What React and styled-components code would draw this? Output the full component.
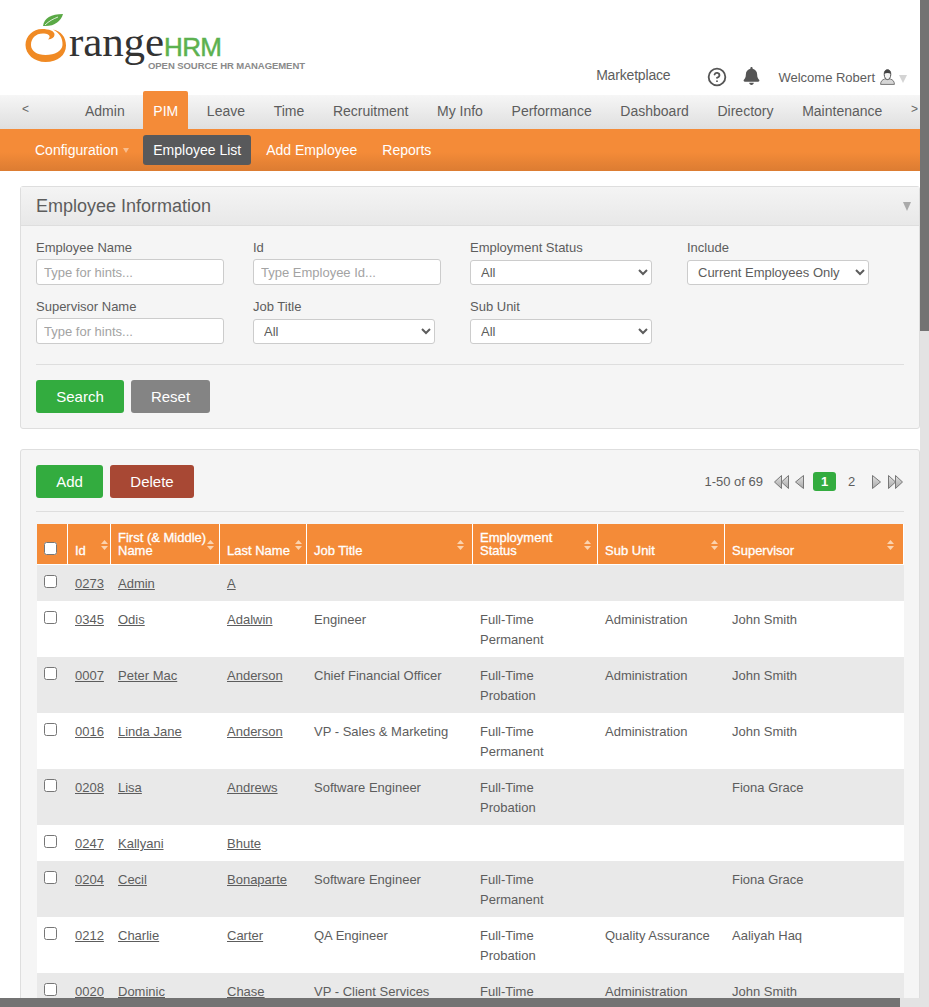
import styled, { createGlobalStyle } from 'styled-components';
import { FaBell } from 'react-icons/fa';
import { CircleHelp } from 'lucide-react';

const GlobalStyle = createGlobalStyle`
    html, body {
        margin: 0;
        padding: 0;
        height: 100%;
        overflow: hidden;
        background: #fff;
    }
    body, input, select, button {
        font-family: "Liberation Sans", Arial, sans-serif;
        font-size: 13px;
        color: #5d5d5d;
    }
`;

const Shell = styled.div`
    display: grid;
    grid-template-columns: minmax(0, 1fr) 9px;
    grid-template-rows: minmax(0, 1fr) 9px;
    height: 100vh;
    overflow: hidden;
`;
const Page = styled.div`
    overflow: hidden;
    min-height: 0;
`;
const VTrack = styled.div`
    background: #e3e3e3;
`;
const VThumb = styled.div`
    height: 331px;
    background: #737373;
`;
const HTrack = styled.div`
    background: #e3e3e3;
`;
const HThumb = styled.div`
    width: 900px;
    height: 100%;
    background: #737373;
`;
const Corner = styled.div`
    background: #e3e3e3;
`;

const Header = styled.header`
    display: flex;
    justify-content: space-between;
    height: 95px;
`;
const Logo = styled.svg`
    width: 320px;
    height: 80px;
    flex: none;
`;
const UserArea = styled.div`
    display: flex;
    align-items: center;
    height: 30px;
    margin-top: 62px;
    padding-right: 13px;
`;
const Marketplace = styled.a`
    margin-right: 37px;
    margin-top: -4px;
    font-size: 14px;
    letter-spacing: -0.18px;
`;
const HelpIcon = styled(CircleHelp)`
    width: 20px;
    height: 20px;
    margin-right: 16px;
    color: #555;
`;
const BellIcon = styled(FaBell)`
    width: 17px;
    height: 18px;
    margin-right: 18px;
    margin-top: -2px;
    color: #555;
`;
const Welcome = styled.span`
    margin-right: 5px;
`;
const GreyArrow = styled.span`
    width: 0;
    height: 0;
    margin-left: 4px;
    margin-top: 3px;
    border-left: 4px solid transparent;
    border-right: 4px solid transparent;
    border-top: 8px solid #d4d4d4;
`;

const MainNav = styled.nav`
    display: flex;
    height: 34px;
    font-size: 14px;
    background: linear-gradient(#f6f6f6, #dfdfdf);
`;
const NavArrow = styled.span`
    flex: none;
    width: ${(p) => (p.$right ? '18px' : '75px')};
    padding-left: ${(p) => (p.$right ? '10px' : '22px')};
    box-sizing: border-box;
    font-size: 12px;
    line-height: 28px;
    color: #666;
`;
const NavItem = styled.a`
    flex: none;
    padding: ${(p) => (p.$active ? '4px' : '0')} 10px 0;
    margin-top: ${(p) => (p.$active ? '-4px' : '0')};
    margin-right: 8.65px;
    line-height: 33px;
    border-radius: 2px 2px 0 0;
    color: ${(p) => (p.$active ? '#fff' : '#5d5d5d')};
    background: ${(p) => (p.$active ? '#f48b38' : 'transparent')};
`;

const SubNav = styled.nav`
    display: flex;
    align-items: flex-start;
    gap: 5px;
    height: 42px;
    padding: 6px 0 0 25px;
    box-sizing: border-box;
    font-size: 14px;
    background: linear-gradient(#f48b38 55%, #dc7c32);
`;
const SubItem = styled.a`
    display: flex;
    align-items: center;
    height: 30px;
    padding: 0 ${(p) => (p.$menu ? '4px' : '10px')} 0 10px;
    border-radius: 3px;
    color: #fff;
    background: ${(p) => (p.$active ? '#58595b' : 'transparent')};
`;
const MenuCaret = styled.span`
    width: 0;
    height: 0;
    margin: 1px 5px 0 5px;
    border-left: 3px solid transparent;
    border-right: 3px solid transparent;
    border-top: 5px solid #f9bd8d;
`;

const Main = styled.main`
    width: 900px;
    margin-left: 20px;
    padding-top: 15px;
`;
const Panel = styled.section`
    margin-bottom: 20px;
    border: 1px solid #dedede;
    border-radius: 3px;
    background: #f5f5f5;
`;
const PanelHead = styled.div`
    display: flex;
    align-items: center;
    justify-content: space-between;
    height: 38px;
    padding: 0 8px 0 15px;
    border-bottom: 1px solid #dedede;
    background: linear-gradient(#f4f4f4, #e8e8e8);
`;
const PanelTitle = styled.h1`
    margin: 0;
    font-size: 18px;
    font-weight: normal;
    color: #5d5d5d;
`;
const Collapse = styled.span`
    width: 0;
    height: 0;
    border-left: 4.5px solid transparent;
    border-right: 4.5px solid transparent;
    border-top: 9px solid #aaa;
`;
const PanelBody = styled.div`
    padding: ${(p) => (p.$list ? '15px' : '13px 15px 15px')};
`;
const FilterGrid = styled.div`
    display: grid;
    grid-template-columns: repeat(4, 217px);
    row-gap: 13px;
`;
const Field = styled.div`
    display: flex;
    flex-direction: column;
    align-items: flex-start;
`;
const FieldLabel = styled.label`
    height: 16px;
    line-height: 18px;
    margin-bottom: 4px;
`;
const TextInput = styled.input`
    width: 188px;
    height: 26px;
    box-sizing: border-box;
    padding: 0 7px;
    border: 1px solid #ccc;
    border-radius: 3px;
    background: #fff;
    outline: none;
    &::placeholder {
        color: #a3a3a3;
        opacity: 1;
    }
`;
const Select = styled.select`
    width: 182px;
    height: 25px;
    margin-top: 1px;
    box-sizing: border-box;
    padding: 0 6px 1px;
    border: 1px solid #ccc;
    border-radius: 3px;
    background: #fff;
`;
const Divider = styled.hr`
    height: 1px;
    margin: ${(p) => (p.$tight ? '13px 0 12px' : '20px 0 15px')};
    border: 0;
    background: #dedede;
`;
const ButtonRow = styled.div`
    display: flex;
    gap: 7px;
`;
const ActionButton = styled.button`
    height: 33px;
    width: ${(p) => p.$width}px;
    padding: 0;
    border: 0;
    border-radius: 3px;
    font-size: 15px;
    color: #fff;
    background: ${(p) => p.$bg};
`;

const ListTop = styled.div`
    display: flex;
    align-items: center;
    justify-content: space-between;
`;
const Pager = styled.div`
    display: flex;
    align-items: center;
    height: 33px;
    padding-right: 1px;
`;
const PagerCount = styled.span`
    margin-right: 11px;
`;
const PagerIcon = styled.svg`
    height: 14px;
    width: ${(p) => (p.$double ? 15 : 9)}px;
    margin-right: ${(p) => p.$gap}px;
`;
const PageNum = styled.span`
    width: 23px;
    height: 19px;
    margin-right: ${(p) => (p.$current ? '4px' : '9px')};
    line-height: 19px;
    text-align: center;
    border-radius: 3px;
    font-weight: ${(p) => (p.$current ? 'bold' : 'normal')};
    color: ${(p) => (p.$current ? '#fff' : '#5d5d5d')};
    background: ${(p) => (p.$current ? '#33ac3f' : 'transparent')};
`;

const Table = styled.table`
    width: 867px;
    margin-left: 1px;
    table-layout: fixed;
    border-collapse: separate;
    border-spacing: 0;
`;
const Col = styled.col`
    width: ${(p) => p.$width}px;
`;
const HeadRow = styled.tr`
    height: 41px;
`;
const Th = styled.th`
    position: relative;
    box-sizing: border-box;
    padding: 0 0 7px 7px;
    vertical-align: bottom;
    text-align: left;
    font-size: 13px;
    font-weight: normal;
    line-height: 13px;
    color: #fff;
    -webkit-text-stroke: 0.3px #fff;
    background: #f48b38;
    border-right: 1px solid #fff;
    border-bottom: 1px solid #fff;
`;
const SortIcon = styled.svg`
    position: absolute;
    top: 16px;
    left: calc((100% - 7px) * 0.95);
    width: 7px;
    height: 10px;
`;
const Td = styled.td`
    padding: 9px 7px 7px;
    vertical-align: top;
    line-height: 20px;
    background: ${(p) => (p.$alt ? '#e9e9e9' : '#fff')};
`;
const CheckCell = styled(Td)`
    padding: 10px 0 0 7px;
`;
const Check = styled.input`
    display: block;
    margin: 0;
`;
const HeadCheck = styled(Check)`
    margin-bottom: 2px;
`;
const RowLink = styled.a`
    color: #5d5d5d;
    text-decoration: underline;
`;

const columns = [
    { width: 31 },
    { width: 43, label: 'Id' },
    { width: 109, label: ['First (& Middle)', 'Name'] },
    { width: 87, label: 'Last Name' },
    { width: 166, label: 'Job Title' },
    { width: 125, label: ['Employment', 'Status'] },
    { width: 127, label: 'Sub Unit' },
    { width: 179, label: 'Supervisor' },
];

const rows = [
    ['0273', 'Admin', 'A', '', [], '', ''],
    ['0345', 'Odis', 'Adalwin', 'Engineer', ['Full-Time', 'Permanent'], 'Administration', 'John Smith'],
    ['0007', 'Peter Mac', 'Anderson', 'Chief Financial Officer', ['Full-Time', 'Probation'], 'Administration', 'John Smith'],
    ['0016', 'Linda Jane', 'Anderson', 'VP - Sales & Marketing', ['Full-Time', 'Permanent'], 'Administration', 'John Smith'],
    ['0208', 'Lisa', 'Andrews', 'Software Engineer', ['Full-Time', 'Probation'], '', 'Fiona Grace'],
    ['0247', 'Kallyani', 'Bhute', '', [], '', ''],
    ['0204', 'Cecil', 'Bonaparte', 'Software Engineer', ['Full-Time', 'Permanent'], '', 'Fiona Grace'],
    ['0212', 'Charlie', 'Carter', 'QA Engineer', ['Full-Time', 'Probation'], 'Quality Assurance', 'Aaliyah Haq'],
    ['0020', 'Dominic', 'Chase', 'VP - Client Services', ['Full-Time'], 'Administration', 'John Smith'],
];

const navItems = ['Admin', 'PIM', 'Leave', 'Time', 'Recruitment', 'My Info', 'Performance', 'Dashboard', 'Directory', 'Maintenance'];

const OrangeLogo = () => (
    <Logo viewBox="0 0 320 80">
        <path
            d="M53 29.5C61 31 66 37 66 45.5C66 55 58 62 45.5 62C34 62 25.5 54 25.5 45C25.5 36 33 29 42 29C49 29 55 31 54.5 35C54.2 37.5 52 39 48 39.5C51 37 50 34 44 33.5C36 33 31 38 31 45C31 51 37 55 45.5 55C55 55 62 51 62.5 45C63 38 59 32.5 53 29.5Z"
            fill="#f08a24"
        />
        <path d="M43 26C44 18 51 14 63 14C61 21 54 27 43 26Z" fill="#5aa945" />
        <path d="M45 25C49 21 53 19 58 17" stroke="#fff" strokeWidth="0.8" fill="none" />
        <text x="69" y="56" fontFamily="Liberation Serif, serif" fontSize="43" fill="#333" textLength="95">
            range
        </text>
        <text x="164" y="56" fontFamily="Liberation Sans, sans-serif" fontSize="26" fill="#5cb14f" stroke="#5cb14f" strokeWidth="0.5" textLength="58">
            HRM
        </text>
        <text x="148" y="68.5" fontFamily="Liberation Sans, sans-serif" fontSize="9.5" fontWeight="bold" fill="#8a8a8a" textLength="157">
            OPEN SOURCE HR MANAGEMENT
        </text>
    </Logo>
);

const Avatar = () => (
    <svg width="15" height="16" viewBox="0 0 15 16">
        <path d="M0.6 15.4C0.6 12 2.4 10.8 4.6 10L10.4 10C12.6 10.8 14.4 12 14.4 15.4Z" fill="#d6d6d6" stroke="#777" />
        <path d="M4.2 5.2C4.2 2 5.8 0.6 7.5 0.6C9.2 0.6 10.8 2 10.8 5.2C10.8 8.4 9.2 10.6 7.5 10.6C5.8 10.6 4.2 8.4 4.2 5.2Z" fill="#f4f4f4" stroke="#555" />
        <path d="M4.2 5C4.4 2 5.8 0.8 7.5 0.8C9.2 0.8 10.6 2 10.8 5C9 3.8 6 3.8 4.2 5Z" fill="#444" />
    </svg>
);

// back/forward pager arrows, one or two triangles
const PagerArrow = ({ dir, double, gap }) => {
    const tri = (x, w) =>
        dir === 'left'
            ? `M${x + w} 0.5L${x + 0.5} 7L${x + w} 13.5Z`
            : `M${x + 0.5} 0.5L${x + w} 7L${x + 0.5} 13.5Z`;
    return (
        <PagerIcon viewBox={double ? '0 0 15 14' : '0 0 9 14'} $double={double} $gap={gap}>
            <defs>
                <linearGradient id="pagerFill" x1="0" y1="0" x2="0" y2="1">
                    <stop offset="0" stopColor="#e2e2e2" />
                    <stop offset="1" stopColor="#a8a8a8" />
                </linearGradient>
            </defs>
            <path d={tri(0, double ? 7.5 : 8.5)} fill="url(#pagerFill)" stroke="#777" />
            {double && <path d={tri(7, 7.5)} fill="url(#pagerFill)" stroke="#777" />}
        </PagerIcon>
    );
};

const Sort = () => (
    <SortIcon viewBox="0 0 7 10">
        <path d="M3.5 0L7 4H0Z M0 6H7L3.5 10Z" fill="#fbd3ae" />
    </SortIcon>
);

const TextField = ({ label, placeholder }) => (
    <Field>
        <FieldLabel>{label}</FieldLabel>
        <TextInput placeholder={placeholder} />
    </Field>
);

const SelectField = ({ label, value = 'All' }) => (
    <Field>
        <FieldLabel>{label}</FieldLabel>
        <Select defaultValue={value}>
            <option>{value}</option>
        </Select>
    </Field>
);

const App = () => {
    return (
        <Shell>
            <GlobalStyle />
            <Page>
                <Header>
                    <OrangeLogo />
                    <UserArea>
                        <Marketplace>Marketplace</Marketplace>
                        <HelpIcon strokeWidth={2.2} />
                        <BellIcon />
                        <Welcome>Welcome Robert</Welcome>
                        <Avatar />
                        <GreyArrow />
                    </UserArea>
                </Header>
                <MainNav>
                    <NavArrow>&lt;</NavArrow>
                    {navItems.map((item) => (
                        <NavItem key={item} $active={item === 'PIM'}>
                            {item}
                        </NavItem>
                    ))}
                    <NavArrow $right>&gt;</NavArrow>
                </MainNav>
                <SubNav>
                    <SubItem $menu>
                        Configuration
                        <MenuCaret />
                    </SubItem>
                    <SubItem $active>Employee List</SubItem>
                    <SubItem>Add Employee</SubItem>
                    <SubItem>Reports</SubItem>
                </SubNav>
                <Main>
                    <Panel>
                        <PanelHead>
                            <PanelTitle>Employee Information</PanelTitle>
                            <Collapse />
                        </PanelHead>
                        <PanelBody>
                            <FilterGrid>
                                <TextField label="Employee Name" placeholder="Type for hints..." />
                                <TextField label="Id" placeholder="Type Employee Id..." />
                                <SelectField label="Employment Status" />
                                <SelectField label="Include" value="Current Employees Only" />
                                <TextField label="Supervisor Name" placeholder="Type for hints..." />
                                <SelectField label="Job Title" />
                                <SelectField label="Sub Unit" />
                            </FilterGrid>
                            <Divider />
                            <ButtonRow>
                                <ActionButton $width={88} $bg="#33ac3f">Search</ActionButton>
                                <ActionButton $width={79} $bg="#848484">Reset</ActionButton>
                            </ButtonRow>
                        </PanelBody>
                    </Panel>
                    <Panel>
                        <PanelBody $list>
                            <ListTop>
                                <ButtonRow>
                                    <ActionButton $width={67} $bg="#33ac3f">Add</ActionButton>
                                    <ActionButton $width={84} $bg="#a84834">Delete</ActionButton>
                                </ButtonRow>
                                <Pager>
                                    <PagerCount>1-50 of 69</PagerCount>
                                    <PagerArrow dir="left" double gap={6} />
                                    <PagerArrow dir="left" gap={9} />
                                    <PageNum $current>1</PageNum>
                                    <PageNum>2</PageNum>
                                    <PagerArrow dir="right" gap={7} />
                                    <PagerArrow dir="right" double gap={0} />
                                </Pager>
                            </ListTop>
                            <Divider $tight />
                            <Table>
                                <colgroup>
                                    {columns.map((col, i) => (
                                        <Col key={i} $width={col.width} />
                                    ))}
                                </colgroup>
                                <thead>
                                    <HeadRow>
                                        {columns.map((col, i) => (
                                            <Th key={i}>
                                                {!col.label && <HeadCheck type="checkbox" />}
                                                {Array.isArray(col.label)
                                                    ? col.label.map((line) => <div key={line}>{line}</div>)
                                                    : col.label}
                                                {col.label && <Sort />}
                                            </Th>
                                        ))}
                                    </HeadRow>
                                </thead>
                                <tbody>
                                    {rows.map((row, i) => {
                                        const alt = i % 2 === 0;
                                        return (
                                            <tr key={row[0]}>
                                                <CheckCell $alt={alt}>
                                                    <Check type="checkbox" />
                                                </CheckCell>
                                                <Td $alt={alt}><RowLink>{row[0]}</RowLink></Td>
                                                <Td $alt={alt}><RowLink>{row[1]}</RowLink></Td>
                                                <Td $alt={alt}><RowLink>{row[2]}</RowLink></Td>
                                                <Td $alt={alt}>{row[3]}</Td>
                                                <Td $alt={alt}>
                                                    {row[4].map((line) => <div key={line}>{line}</div>)}
                                                </Td>
                                                <Td $alt={alt}>{row[5]}</Td>
                                                <Td $alt={alt}>{row[6]}</Td>
                                            </tr>
                                        );
                                    })}
                                </tbody>
                            </Table>
                        </PanelBody>
                    </Panel>
                </Main>
            </Page>
            <VTrack>
                <VThumb />
            </VTrack>
            <HTrack>
                <HThumb />
            </HTrack>
            <Corner />
        </Shell>
    );
};

export default App;
